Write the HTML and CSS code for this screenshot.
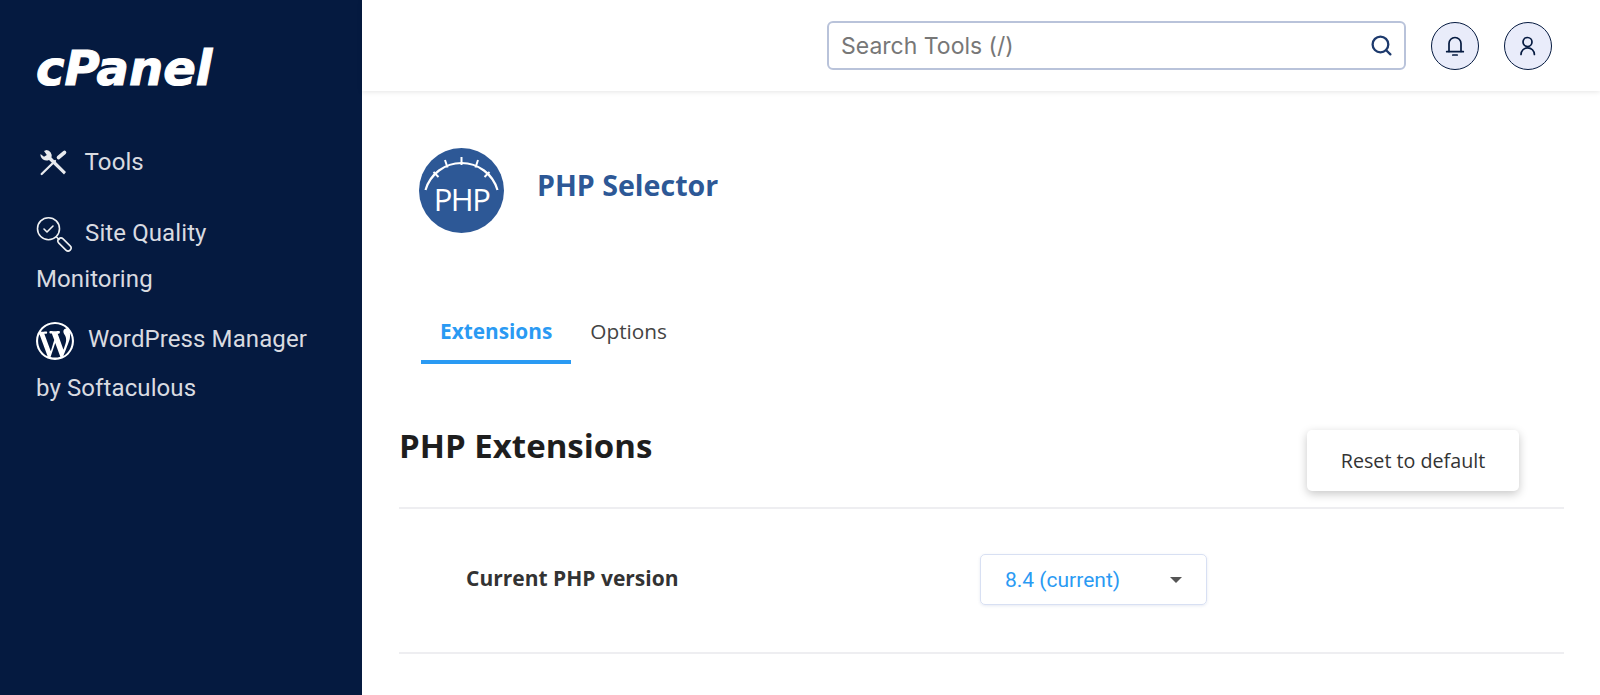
FILE: index.html
```html
<!DOCTYPE html>
<html lang="en">
<head>
<meta charset="utf-8">
<title>PHP Selector</title>
<link rel="stylesheet" href="styles.css">
</head>
<body>
<div class="app">
  <aside class="sidebar">
    <div class="logo">cPanel</div>
    <nav class="nav">
      <a class="nav-item nav-tools">
        <svg class="ico-tools" viewBox="0 0 29 29"><path fill="#e8eaee" d="M7.500 1 A6 6 0 0 1 12.500 8.500 L27 23 L25 25.500 L10 11 A6 6 0 0 1 1.500 5 L5 7.800 L7.800 6 L5 2 Z"/><path d="M2.700 25 L16 12" stroke="#e8eaee" stroke-width="2.300" stroke-linecap="round"/><path d="M19.500 8.500 L25.500 3.500" stroke="#e8eaee" stroke-width="3.600" stroke-linecap="round"/></svg>
        Tools
      </a>
      <a class="nav-item nav-quality">
        <svg class="ico-quality" viewBox="0 0 37 37" fill="none" stroke="#f0f1f3" stroke-width="1.600" stroke-linecap="round" stroke-linejoin="round"><circle cx="12.500" cy="12.700" r="11"/><path d="M8 13 L11 16 L17 10"/><path d="M20.500 21 L23 23.500"/><rect x="-3" y="-8" width="6" height="16" rx="3" transform="translate(28.500 28.500) rotate(-45)"/></svg>
        Site Quality Monitoring
      </a>
      <a class="nav-item nav-wp">
        <svg class="ico-wp" viewBox="0 0 20 20"><path fill="#fff" fill-rule="evenodd" d="M20 10c0-5.510-4.490-10-10-10C4.480 0 0 4.490 0 10c0 5.520 4.480 10 10 10 5.510 0 10-4.480 10-10zM7.780 15.370L4.370 6.220c.55-.02 1.170-.08 1.170-.08.5-.06.44-1.130-.06-1.110 0 0-1.450.11-2.370.11-.18 0-.37 0-.58-.01C4.120 2.690 6.870 1.070 10 1.070c2.330 0 4.450.87 6.050 2.340-.68-.11-1.650.39-1.650 1.580 0 .74.45 1.360.9 2.100.35.61.55 1.360.55 2.460 0 1.490-1.400 5-1.400 5l-3.030-8.370c.54-.02.82-.17.82-.17.5-.05.44-1.250-.06-1.220 0 0-1.440.12-2.380.12-.87 0-2.330-.12-2.330-.12-.5-.03-.56 1.200-.06 1.220l.92.080 1.260 3.410zM17.410 10c.24-.64.74-1.870.43-4.250.7 1.290 1.050 2.710 1.050 4.250 0 3.290-1.730 6.240-4.490 7.870.3-.8 1.450-3.600 3.010-7.870zM6.100 18.090C3.120 16.640 1.110 13.530 1.110 10c0-1.300.23-2.480.72-3.590zM10.130 11.110l2.570 6.980c.02.05.05.09.07.14-.87.31-1.800.47-2.770.47-.82 0-1.600-.120-2.330-.330z"/></svg>
        WordPress Manager by Softaculous
      </a>
    </nav>
  </aside>
  <div class="main">
    <header class="topbar">
      <div class="search">
        <span class="search-text">Search Tools (/)</span>
        <svg class="ico-search" viewBox="0 0 22 22" fill="none" stroke="#1d3a6d" stroke-width="2.200" stroke-linecap="round"><circle cx="10" cy="10" r="7.500"/><path d="M15.500 15.500 L19.500 19.500"/></svg>
      </div>
      <button class="round-btn" aria-label="Notifications">
        <svg viewBox="0 0 48 48" fill="none" stroke="#051a40" stroke-width="1.700" stroke-linecap="round" stroke-linejoin="round"><path d="M18 29.500 V21.500 A6 6 0 0 1 30 21.500 V29.500"/><path d="M15.700 29.700 H32.300"/><path d="M21.800 33 H26.200"/></svg>
      </button>
      <button class="round-btn" aria-label="Account">
        <svg viewBox="0 0 48 48" fill="none" stroke="#051a40" stroke-width="1.700" stroke-linecap="round"><circle cx="23.500" cy="20" r="4.500"/><path d="M17 32.500 A6.700 6.700 0 0 1 30.400 32.500"/></svg>
      </button>
    </header>
    <section class="content">
      <div class="app-head">
        <svg class="php-logo" viewBox="0 0 85 85">
          <circle cx="42.500" cy="42.500" r="42.500" fill="#2d5896"/>
          <path d="M6.500 42 A37.500 37.500 0 0 1 78.500 42" fill="none" stroke="#fff" stroke-width="2.200"/>
          <path d="M42.500 9 V17 M26 12 L28.500 19.500 M59 12 L56.500 19.500 M14.500 24 L19.500 29 M70.500 24 L65.500 29" stroke="#fff" stroke-width="2"/>
          <text x="42.500" y="63" text-anchor="middle" class="php-text">PHP</text>
        </svg>
        <h1 class="app-title">PHP Selector</h1>
      </div>
      <div class="tabs">
        <a class="tab tab-active">Extensions</a>
        <a class="tab">Options</a>
      </div>
      <div class="section-head">
        <h2 class="section-title">PHP Extensions</h2>
        <button class="reset-btn">Reset to default</button>
      </div>
      <div class="version-row">
        <span class="version-label">Current PHP version</span>
        <div class="select">
          <span>8.4 (current)</span>
          <i class="caret"></i>
        </div>
      </div>
    </section>
  </div>
</div>
</body>
</html>
```
FILE: styles.css
```css
* { box-sizing: border-box; }
html, body { margin: 0; height: 100%; overflow: hidden; background: #fff; }
body { font-family: "Open Sans", sans-serif; color: #222; }
.app { display: flex; height: 695px; }

.sidebar { width: 362px; flex: none; background: #051a40; padding: 38px 50px 0 36px; color: #d9dbe0; }
.logo { font-family: "DejaVu Sans", sans-serif; font-weight: 700; font-style: italic; font-size: 48px; line-height: 60px; height: 60px; letter-spacing: 0; color: #fff; -webkit-text-stroke: 1.100px #fff; }
.nav { margin-top: 40px; font-family: Roboto, sans-serif; font-size: 24px; line-height: 48px; letter-spacing: 0.1px; }
.nav-item { display: block; }
.nav-item svg { vertical-align: middle; }
.nav-tools { margin-left: 3px; }
.ico-tools { width: 29px; height: 29px; margin-right: 11px; }
.nav-quality { margin-top: 24px; line-height: 46px; }
.ico-quality { width: 37px; height: 37px; margin-right: 6px; }
.nav-wp { margin-top: 13px; line-height: 49px; }
.ico-wp { width: 38px; height: 38px; margin-right: 8px; }

.main { flex: 1; min-width: 0; }
.topbar { height: 91px; display: flex; align-items: center; justify-content: flex-end; gap: 25px; padding: 0 48px 0 0; box-shadow: 0 1px 5px rgba(0,0,0,.1); }
.search { width: 579px; height: 49px; border: 2px solid #b9c3da; border-radius: 6px; display: flex; align-items: center; justify-content: space-between; padding: 0 11px 0 12px; }
.search-text { font-family: Inter, sans-serif; font-size: 23px; color: #777; }
.ico-search { width: 23px; height: 23px; }
.round-btn { width: 48px; height: 48px; padding: 0; border: 1.500px solid #051a40; border-radius: 50%; background: #e9ecfa; display: flex; align-items: center; justify-content: center; flex: none; }
.round-btn svg { width: 48px; height: 48px; flex: none; }

.content { padding: 57px 36px 0 37px; }
.app-head { display: flex; align-items: center; gap: 33px; margin-left: 20px; }
.php-logo { width: 85px; height: 85px; flex: none; }
.php-text { font-family: "Open Sans", sans-serif; font-size: 31px; letter-spacing: -1.500px; fill: #fff; }
.app-title { margin: 0 0 11px; font-size: 28.600px; font-weight: 700; color: #2d5896; line-height: 38px; }
.tabs { display: flex; margin: 74px 0 0 22px; }
.tab { font-size: 20.800px; line-height: 28px; padding: 10px 19px 15px; color: #444; border-bottom: 4px solid transparent; }
.tab-active { font-weight: 700; color: #2a9af3; border-bottom-color: #2a9af3; }
.section-head { display: flex; justify-content: space-between; align-items: flex-start; height: 145px; padding-top: 60px; border-bottom: 2px solid #eeeef1; }
.section-title { margin: 0; font-size: 33px; font-weight: 700; line-height: 44px; color: #1e1e1e; }
.reset-btn { width: 212px; height: 61px; margin: 6px 45px 0 0; border: 0; border-radius: 5px; background: #fff; box-shadow: 0 3px 10px rgba(0,0,0,.22); font-family: "Open Sans", sans-serif; font-size: 19.700px; color: #333; }
.version-row { display: flex; align-items: center; height: 145px; padding-left: 67px; border-bottom: 2px solid #eeeef1; }
.version-label { width: 514px; margin-bottom: 6px; font-size: 21px; font-weight: 700; color: #333; }
.select { width: 227px; height: 51px; margin-bottom: 2px; display: flex; align-items: center; justify-content: space-between; padding: 0 24px 0 24px; border: 1.500px solid #d8e0f3; border-radius: 5px; font-family: Roboto, sans-serif; font-size: 21px; color: #2a9af3; box-shadow: 0 1px 3px rgba(60,80,160,.12); }
.caret { width: 0; height: 0; border-left: 6.500px solid transparent; border-right: 6.500px solid transparent; border-top: 6.500px solid #555; }
```
